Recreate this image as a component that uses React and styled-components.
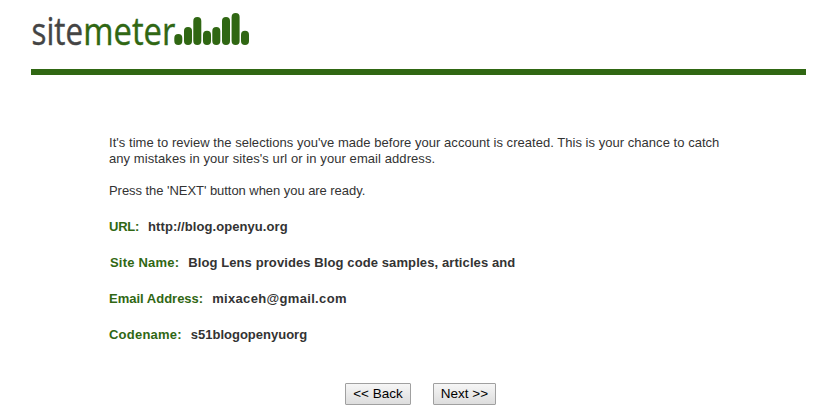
import React from "react";
import styled, { createGlobalStyle } from "styled-components";

const GlobalStyle = createGlobalStyle`
  body {
    margin: 0;
    background: #fff;
    font-family: "Liberation Sans", Arial, sans-serif;
    color: #333;
  }
`;

const Page = styled.div`
  box-sizing: border-box;
  width: 838px;
  height: 413px;
  padding: 0 32px 0 31px;
  overflow: hidden;
`;

const Header = styled.header`
  height: 69px;
  border-bottom: 6px solid #306713;
`;

const Logo = styled.svg`
  display: block;
  font-family: "Open Sans", "Noto Sans", sans-serif;
  font-size: 38px;
`;

const Content = styled.main`
  padding: 60px 0 0 78px;
`;

const Paragraph = styled.p`
  margin: 0 0 16px;
  font: 13px/16px "Liberation Sans", Arial, sans-serif;
  letter-spacing: ${(p) => p.$spacing};
  white-space: nowrap;
`;

const Line = styled.span`
  display: block;
  letter-spacing: ${(p) => p.$spacing};
`;

const Details = styled.dl`
  display: flex;
  flex-direction: column;
  gap: 20px;
  margin: 20px 0 0;
`;

const Detail = styled.div`
  display: flex;
  gap: 9px;
  font: bold 13px/16px "Liberation Sans", Arial, sans-serif;
  padding-left: ${(p) => p.$indent || "0"};
  white-space: nowrap;
`;

const Label = styled.dt`
  color: #306713;
  letter-spacing: ${(p) => p.$spacing};
`;

const Value = styled.dd`
  margin: 0;
  letter-spacing: ${(p) => p.$spacing};
`;

const Actions = styled.div`
  display: flex;
  gap: 22px;
  margin: 40px 0 0 236px;
`;

const Button = styled.button`
  box-sizing: border-box;
  width: ${(p) => p.$width};
  height: 22px;
  padding: 0;
  border: 1px solid #a0a0a0;
  border-radius: 1px;
  background: linear-gradient(#f6f6f6, #dddddd);
  color: #000;
  font: 13.5px/20px "Liberation Sans", Arial, sans-serif;
  white-space: nowrap;
`;

const bars = [
  [143.3, 34],
  [153, 27],
  [162.3, 17],
  [172, 30.7],
  [181.3, 27],
  [191, 17],
  [200.6, 13],
  [210, 30.7],
];

const details = [
  { label: "URL:", value: "http://blog.openyu.org", labelSpacing: "-0.25px", valueSpacing: "0.08px" },
  {
    label: "Site Name:",
    value: "Blog Lens provides Blog code samples, articles and",
    indent: "1px",
    labelSpacing: "0.2px",
    valueSpacing: "0.1px",
  },
  { label: "Email Address:", value: "mixaceh@gmail.com", labelSpacing: "0", valueSpacing: "0.33px" },
  { label: "Codename:", value: "s51blogopenyuorg", labelSpacing: "0.22px", valueSpacing: "0" },
];

export default function App() {
  return (
    <Page>
      <GlobalStyle />
      <Header>
        <Logo width="230" height="60" role="img" aria-label="sitemeter">
          <text x="0.5" y="44.5" fill="#444" stroke="#444" strokeWidth="0.4" textLength="51.5" lengthAdjust="spacingAndGlyphs">
            site
          </text>
          <text x="52.3" y="44.5" fill="#306713" stroke="#306713" strokeWidth="0.4" textLength="92" lengthAdjust="spacingAndGlyphs">
            meter
          </text>
          {bars.map(([x, y]) => (
            <rect key={x} x={x} y={y} width="8" height={45 - y} rx="4" fill="#306713" />
          ))}
        </Logo>
      </Header>
      <Content>
        <Paragraph>
          <Line $spacing="0.035px">
            It's time to review the selections you've made before your account is created. This is your chance to catch
          </Line>
          <Line $spacing="0.075px">any mistakes in your sites's url or in your email address.</Line>
        </Paragraph>
        <Paragraph $spacing="-0.05px">Press the 'NEXT' button when you are ready.</Paragraph>
        <Details>
          {details.map((d) => (
            <Detail key={d.label} $indent={d.indent}>
              <Label $spacing={d.labelSpacing}>{d.label}</Label>
              <Value $spacing={d.valueSpacing}>{d.value}</Value>
            </Detail>
          ))}
        </Details>
        <Actions>
          <Button $width="66px">&lt;&lt; Back</Button>
          <Button $width="63px">Next &gt;&gt;</Button>
        </Actions>
      </Content>
    </Page>
  );
}
